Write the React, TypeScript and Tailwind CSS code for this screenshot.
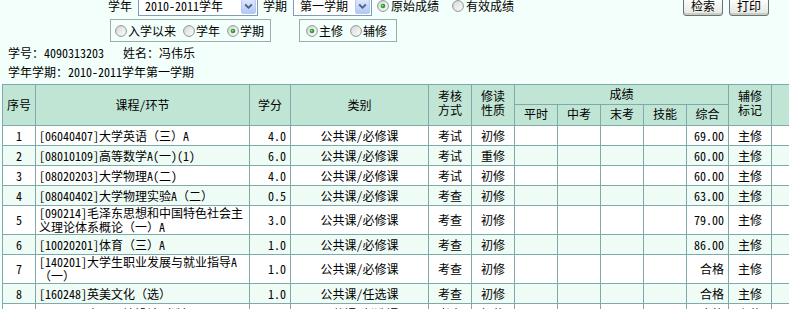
import { useId } from 'react'

interface GradeRow {
  no: number
  course: string[]
  credit: string
  type: string
  exam: string
  nature: string
  total: string
  mark: string
}

const rows: GradeRow[] = [
  { no: 1, course: ['[06040407]大学英语（三）A'], credit: '4.0', type: '公共课/必修课', exam: '考试', nature: '初修', total: '69.00', mark: '主修' },
  { no: 2, course: ['[08010109]高等数学A(一)(1)'], credit: '6.0', type: '公共课/必修课', exam: '考试', nature: '重修', total: '60.00', mark: '主修' },
  { no: 3, course: ['[08020203]大学物理A(二)'], credit: '4.0', type: '公共课/必修课', exam: '考试', nature: '初修', total: '60.00', mark: '主修' },
  { no: 4, course: ['[08040402]大学物理实验A（二）'], credit: '0.5', type: '公共课/必修课', exam: '考查', nature: '初修', total: '63.00', mark: '主修' },
  { no: 5, course: ['[090214]毛泽东思想和中国特色社会主', '义理论体系概论（一）A'], credit: '3.0', type: '公共课/必修课', exam: '考查', nature: '初修', total: '79.00', mark: '主修' },
  { no: 6, course: ['[10020201]体育（三）A'], credit: '1.0', type: '公共课/必修课', exam: '考查', nature: '初修', total: '86.00', mark: '主修' },
  { no: 7, course: ['[140201]大学生职业发展与就业指导A', '（一）'], credit: '1.0', type: '公共课/必修课', exam: '考查', nature: '初修', total: '合格', mark: '主修' },
  { no: 8, course: ['[160248]英美文化（选）'], credit: '1.0', type: '公共课/任选课', exam: '考查', nature: '初修', total: '合格', mark: '主修' },
  { no: 9, course: ['[160258]商品环境设计（选）'], credit: '1.0', type: '公共课/任选课', exam: '考查', nature: '初修', total: '合格', mark: '主修' },
]

function Radio({ checked = false }: { checked?: boolean }) {
  const id = useId()
  return (
    <svg width="12" height="12" viewBox="0 0 12 12" className="shrink-0">
      <defs>
        <linearGradient id={id} x1="0" y1="0" x2="1" y2="1">
          <stop offset="0" stopColor="#d6d6cf" />
          <stop offset="1" stopColor="#ffffff" />
        </linearGradient>
      </defs>
      <circle cx="6" cy="6" r="5.4" fill={`url(#${id})`} stroke="#8c969e" strokeWidth="1" />
      {checked && (
        <>
          <circle cx="6" cy="6" r="2.3" fill="#2d9e2d" />
          <circle cx="5.6" cy="5.6" r="0.9" fill="#9be39b" />
        </>
      )}
    </svg>
  )
}

function ComboArrow() {
  return (
    <div className="w-[15px] h-[15px] rounded-[2px] border border-[#b6c9f4] bg-gradient-to-b from-[#dde7fd] to-[#b3c7f5] flex items-center justify-center shrink-0">
      <svg width="9" height="7" viewBox="0 0 9 7">
        <path d="M1.2 1.5 L4.5 4.8 L7.8 1.5" stroke="#4a5f86" strokeWidth="1.8" fill="none" />
      </svg>
    </div>
  )
}

function Combo({ value, width }: { value: string; width: string }) {
  return (
    <div className={`${width} h-[19px] bg-white border border-[#7f9db9] flex items-center justify-between pl-[6px] pr-px`}>
      <span className="leading-none">{value}</span>
      <ComboArrow />
    </div>
  )
}

function XpButton({ label }: { label: string }) {
  return (
    <button className="w-[40px] h-[19px] rounded-[3px] border border-[#65737a] bg-gradient-to-b from-white to-[#e5e7df] shadow-[inset_0_-2px_0_#c9cdc2] flex items-center justify-center leading-none text-black">
      {label}
    </button>
  )
}

const cellBorder = 'border border-[#7eaaaa]'

export default function App() {
  return (
    <div
      className="w-[789px] h-[309px] overflow-hidden bg-[#f3fffb] text-[12px] text-black"
      style={{ fontFamily: '"Noto Sans Mono CJK SC", "Noto Sans CJK SC", sans-serif' }}
    >
      {/* search bar */}
      <div className="flex items-center h-[20px] -mt-[4px]">
        <span className="ml-[108px] w-[24px]">学年</span>
        <div className="ml-[6px]">
          <Combo value="2010-2011学年" width="w-[120px]" />
        </div>
        <span className="ml-[5px] w-[24px]">学期</span>
        <div className="ml-[6px]">
          <Combo value="第一学期" width="w-[79px]" />
        </div>
        <div className="ml-[5px] flex items-center">
          <Radio checked />
          <span className="ml-[2px]">原始成绩</span>
        </div>
        <div className="ml-[13px] flex items-center">
          <Radio />
          <span className="ml-[2px]">有效成绩</span>
        </div>
        <div className="ml-auto mr-[20px] flex gap-[6px]">
          <XpButton label="检索" />
          <XpButton label="打印" />
        </div>
      </div>

      <div className="flex mt-[3px] h-[23px]">
        <div className="ml-[110px] w-[161px] border border-[#9eabab] flex items-center pl-[4px]">
          <Radio />
          <span className="ml-[1px]">入学以来</span>
          <span className="ml-[7px]"><Radio /></span>
          <span className="ml-[1px]">学年</span>
          <span className="ml-[7px]"><Radio checked /></span>
          <span className="ml-[1px]">学期</span>
        </div>
        <div className="ml-[28px] w-[98px] border border-[#9eabab] flex items-center pl-[6px]">
          <Radio checked />
          <span className="ml-[1px]">主修</span>
          <span className="ml-[7px]"><Radio /></span>
          <span className="ml-[1px]">辅修</span>
        </div>
      </div>

      <div className="flex items-center h-[18px] mt-[2px] pl-[8px]">
        <span className="w-[115px]">学号：4090313203</span>
        <span>姓名：冯伟乐</span>
      </div>
      <div className="flex items-center h-[18px] mt-px pl-[8px]">学年学期：2010-2011学年第一学期</div>

      <table className="mt-[3px] ml-[2px] w-[830px] table-fixed border-collapse">
        <colgroup>
          <col className="w-[33px]" />
          <col className="w-[214px]" />
          <col className="w-[41px]" />
          <col className="w-[138px]" />
          <col className="w-[43px]" />
          <col className="w-[43px]" />
          <col className="w-[43px]" />
          <col className="w-[43px]" />
          <col className="w-[43px]" />
          <col className="w-[43px]" />
          <col className="w-[42px]" />
          <col className="w-[43px]" />
          <col className="w-[61px]" />
        </colgroup>
        <thead className="bg-[#c1e5d5] font-normal">
          <tr className="h-[20px]">
            <th rowSpan={2} className={`${cellBorder} font-normal`}>序号</th>
            <th rowSpan={2} className={`${cellBorder} font-normal`}>课程/环节</th>
            <th rowSpan={2} className={`${cellBorder} font-normal`}>学分</th>
            <th rowSpan={2} className={`${cellBorder} font-normal`}>类别</th>
            <th rowSpan={2} className={`${cellBorder} font-normal leading-[14px] pb-[4px]`}>考核<br />方式</th>
            <th rowSpan={2} className={`${cellBorder} font-normal leading-[14px] pb-[4px]`}>修读<br />性质</th>
            <th colSpan={5} className={`${cellBorder} font-normal leading-[14px] pb-[2px]`}>成绩</th>
            <th rowSpan={2} className={`${cellBorder} font-normal leading-[14px] pb-[4px]`}>辅修<br />标记</th>
            <th rowSpan={2} className={cellBorder}></th>
          </tr>
          <tr className="h-[21px]">
            {['平时', '中考', '末考', '技能', '综合'].map((h) => (
              <th key={h} className={`${cellBorder} font-normal leading-[14px] pb-[2px]`}>{h}</th>
            ))}
          </tr>
        </thead>
        <tbody>
          {rows.map((r) => (
            <tr key={r.no} className={r.no % 2 === 0 ? 'bg-[#effcf6]' : 'bg-white'}>
              <td className={`${cellBorder} h-[20px] text-center leading-[14px]`}>{r.no}</td>
              <td className={`${cellBorder} pl-[3px] leading-[14px] whitespace-nowrap`}>
                {r.course.map((line, i) => (
                  <div key={i}>{line}</div>
                ))}
              </td>
              <td className={`${cellBorder} text-right pr-[4px] leading-[14px]`}>{r.credit}</td>
              <td className={`${cellBorder} text-center leading-[14px]`}>{r.type}</td>
              <td className={`${cellBorder} text-center leading-[14px]`}>{r.exam}</td>
              <td className={`${cellBorder} text-center leading-[14px]`}>{r.nature}</td>
              <td className={cellBorder}></td>
              <td className={cellBorder}></td>
              <td className={cellBorder}></td>
              <td className={cellBorder}></td>
              <td className={`${cellBorder} text-right pr-[4px] leading-[14px]`}>{r.total}</td>
              <td className={`${cellBorder} text-center leading-[14px]`}>{r.mark}</td>
              <td className={cellBorder}></td>
            </tr>
          ))}
        </tbody>
      </table>
    </div>
  )
}
